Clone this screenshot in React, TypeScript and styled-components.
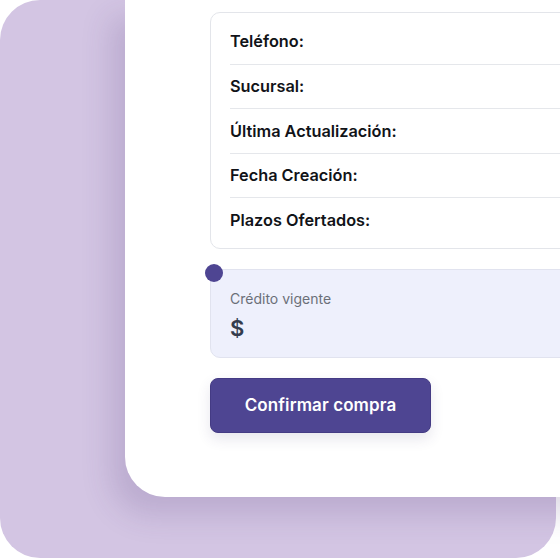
import React from "react";
import styled, { createGlobalStyle } from "styled-components";

const GlobalStyle = createGlobalStyle`
  html, body {
    margin: 0;
    padding: 0;
    background: #ffffff;
  }
  body {
    font-family: Inter, "Noto Sans", "Liberation Sans", sans-serif;
  }
`;

const Page = styled.div`
  width: 560px;
  height: 560px;
  overflow: hidden;
`;

const Backdrop = styled.div`
  width: 556px;
  height: 558px;
  background: #d3c5e3;
  border-radius: 40px;
  box-sizing: border-box;
  padding-left: 125px;
`;

const Card = styled.div`
  width: 620px;
  height: 497px;
  background: #ffffff;
  border-radius: 0 0 0 40px;
  box-shadow: -14px 18px 30px rgba(70, 50, 110, 0.17);
  box-sizing: border-box;
  padding: 12px 0 0 85px;
`;

const InfoBox = styled.div`
  border: 1px solid #e3e5ea;
  border-radius: 10px;
  padding: 6px 19px 6px;
`;

const Row = styled.div`
  height: 44.5px;
  display: flex;
  align-items: center;
  box-sizing: border-box;
  font-size: 16.3px;
  font-weight: 600;
  color: #111318;
  & + & {
    border-top: 1px solid #e5e7eb;
  }
`;

const CreditBox = styled.div`
  position: relative;
  margin-top: 20px;
  height: 89px;
  box-sizing: border-box;
  background: #eef0fc;
  border: 1px solid #e1e3ef;
  border-radius: 10px;
  padding: 20px 19px 0;
`;

const Dot = styled.span`
  position: absolute;
  left: -6px;
  top: -6px;
  width: 18px;
  height: 18px;
  border-radius: 50%;
  background: #4e4592;
`;

const CreditLabel = styled.div`
  font-size: 14px;
  line-height: 18px;
  color: #6b6f78;
`;

const CreditValue = styled.div`
  margin-top: 6px;
  font-size: 22px;
  line-height: 28px;
  font-weight: 600;
  color: #343c4d;
`;

const ConfirmButton = styled.button`
  margin-top: 20px;
  width: 221px;
  height: 55px;
  border: 1px solid #443b84;
  border-radius: 8px;
  background: #4e4592;
  color: #ffffff;
  font-family: inherit;
  font-size: 17px;
  font-weight: 600;
  letter-spacing: 0.1px;
  box-shadow: 0 6px 14px rgba(60, 50, 110, 0.12);
  cursor: pointer;
`;

const labels = [
  "Teléfono:",
  "Sucursal:",
  "Última Actualización:",
  "Fecha Creación:",
  "Plazos Ofertados:",
];

export default function App() {
  return (
    <>
      <GlobalStyle />
      <Page>
        <Backdrop>
          <Card>
            <InfoBox>
              {labels.map((label) => (
                <Row key={label}>{label}</Row>
              ))}
            </InfoBox>
            <CreditBox>
              <Dot />
              <CreditLabel>Crédito vigente</CreditLabel>
              <CreditValue>$</CreditValue>
            </CreditBox>
            <ConfirmButton>Confirmar compra</ConfirmButton>
          </Card>
        </Backdrop>
      </Page>
    </>
  );
}
